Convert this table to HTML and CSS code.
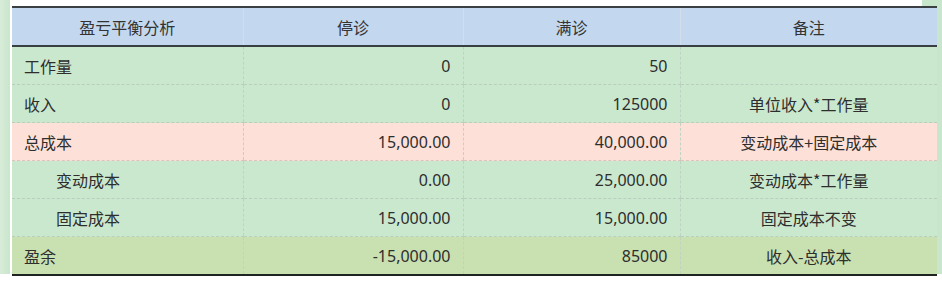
FILE: index.html
```html
<!DOCTYPE html>
<html lang="zh">
<head>
<meta charset="utf-8">
<link rel="stylesheet" href="styles.css">
</head>
<body>
<div class="page">
  <div class="sheet">
    <table class="grid">
      <colgroup>
        <col class="c1"><col class="c2"><col class="c3"><col class="c4">
      </colgroup>
      <thead>
        <tr><th>盈亏平衡分析</th><th>停诊</th><th>满诊</th><th>备注</th></tr>
      </thead>
      <tbody>
        <tr class="g"><td class="lbl">工作量</td><td class="num">0</td><td class="num">50</td><td class="note"></td></tr>
        <tr class="g"><td class="lbl">收入</td><td class="num">0</td><td class="num">125000</td><td class="note">单位收入*工作量</td></tr>
        <tr class="p"><td class="lbl">总成本</td><td class="num">15,000.00</td><td class="num">40,000.00</td><td class="note">变动成本+固定成本</td></tr>
        <tr class="g"><td class="lbl sub">变动成本</td><td class="num">0.00</td><td class="num">25,000.00</td><td class="note">变动成本*工作量</td></tr>
        <tr class="g"><td class="lbl sub">固定成本</td><td class="num">15,000.00</td><td class="num">15,000.00</td><td class="note">固定成本不变</td></tr>
        <tr class="o"><td class="lbl">盈余</td><td class="num">-15,000.00</td><td class="num">85000</td><td class="note">收入-总成本</td></tr>
      </tbody>
    </table>
  </div>
</div>
</body>
</html>
```
FILE: styles.css
```css
html, body {
  margin: 0;
  padding: 0;
  background: #ffffff;
}
body {
  width: 942px;
  height: 285px;
  overflow: hidden;
  font-family: "Noto Sans", "Noto Sans CJK SC", sans-serif;
  color: #2e2e2e;
}
.page {
  background: linear-gradient(to right, #d8ecd9 0, #c9e6cc 10px, #ffffff 10px, #ffffff 922px, #c8e6cc 922px);
  padding-top: 6px;
  height: 268px;
}
.sheet {
  padding-left: 12px;
}
.grid {
  border-collapse: collapse;
  table-layout: fixed;
  width: 925px;
  font-size: 16px;
}
.c1 { width: 231px; }
.c2 { width: 220px; }
.c3 { width: 217px; }
.c4 { width: 257px; }
thead th {
  background: #c3d8ee;
  height: 37px;
  font-weight: normal;
  border-top: 2px solid #3a3f44;
  border-bottom: 2px solid #3a3f44;
  border-left: 1px solid #d2deea;
  text-align: center;
  padding: 0;
  font-family: "Noto Sans CJK SC", sans-serif;
  color: #333;
}
thead th:first-child { border-left: none; }
tbody td {
  height: 37px;
  padding: 0 12px;
  border-bottom: 1px dashed #b9cfbc;
  border-left: 1px dashed #c0d3c2;
  white-space: nowrap;
}
tbody td:first-child { border-left: none; }
tbody tr:last-child td {
  border-bottom: 2px solid #1e2420;
}
tr.g td { background: #cae8ce; }
tr.p td { background: #fde1d8; border-bottom-color: #d9c5bd; }
tr.o td { background: #c9e0b1; }
.lbl {
  font-family: "Noto Sans CJK SC", sans-serif;
  padding-left: 12px;
}
.lbl.sub { padding-left: 44px; }
.num {
  text-align: right;
}
.note {
  text-align: center;
  font-family: "Noto Sans CJK SC", sans-serif;
}
```
